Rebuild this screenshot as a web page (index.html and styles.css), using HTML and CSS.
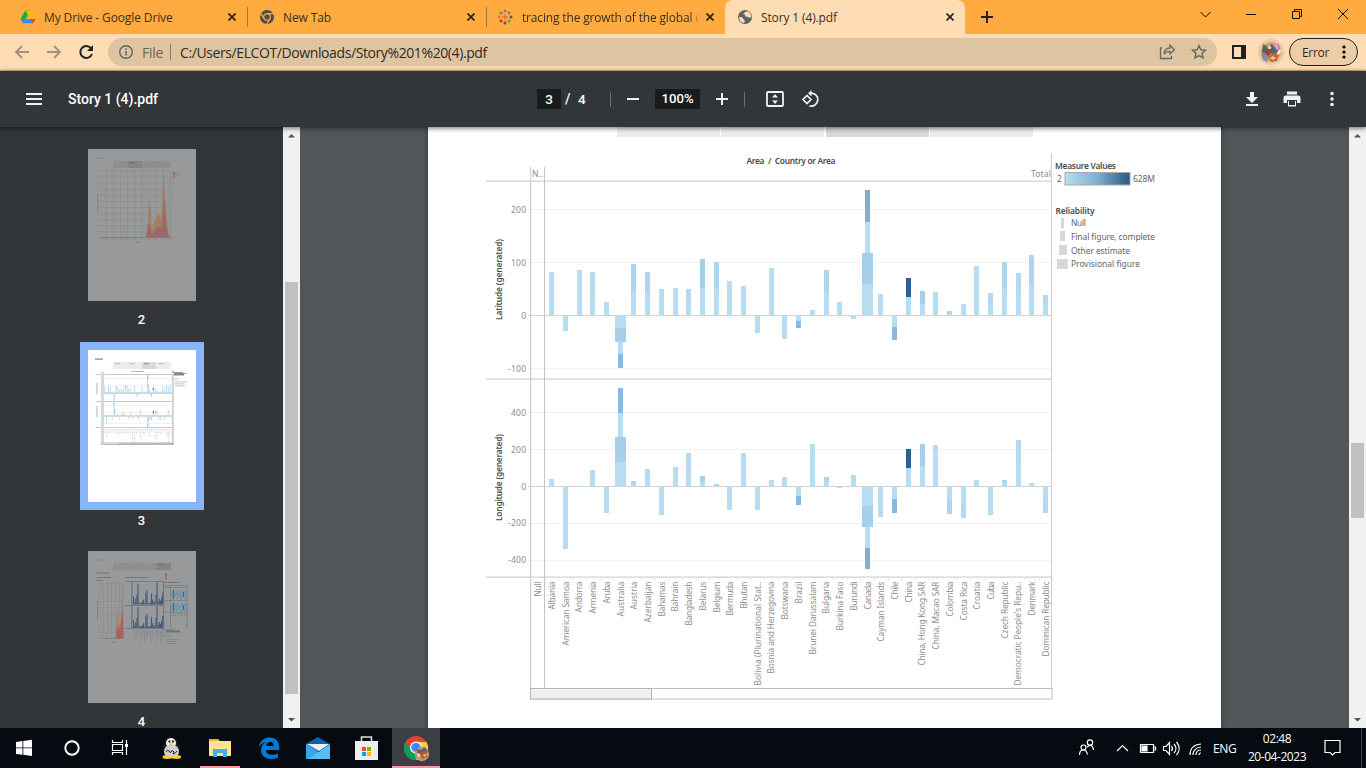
FILE: index.html
```html
<!DOCTYPE html>
<html lang="en">
<head>
<meta charset="utf-8">
<title>Story 1 (4).pdf</title>
<link rel="stylesheet" href="styles.css">
</head>
<body>
<div class="screen">
  <header class="tabs">
    <div class="tab t1">
      <svg class="fav" viewBox="0 0 16 16"><path d="M5.4 1.5 10.6 1.5 7.8 6z" fill="#188038"/><path d="M5.4 1.5 8 6 3.2 14.2.6 9.8z" fill="#1ea44c"/><path d="M5.4 1.5h5.2L15.4 10h-5.2z" fill="#fbbc04"/><path d="M.7 10h14.7l-2.5 4.2H3.2z" fill="#4285f4"/><path d="M10.2 10h5.2l-2.5 4.2z" fill="#ea4335"/><path d="M8 6l2.3 4H5.7z" fill="#ffab40"/></svg>
      <span class="tt">My Drive - Google Drive</span>
      <svg class="x" viewBox="0 0 8 8"><path d="M.5.5l7 7m0-7l-7 7"/></svg>
    </div>
    <div class="tab t2">
      <svg class="fav" viewBox="0 0 16 16"><circle cx="8" cy="8" r="7" fill="#4a4d51"/><circle cx="8" cy="8" r="3.4" fill="#4a4d51" stroke="#ffab40" stroke-width="1.2"/><path d="M8 4.6h6.4M5 9.8 1.8 4.4M11 9.7 7.8 15" stroke="#ffab40" stroke-width="1.2"/></svg>
      <span class="tt">New Tab</span>
      <svg class="x" viewBox="0 0 8 8"><path d="M.5.5l7 7m0-7l-7 7"/></svg>
    </div>
    <div class="tab t3">
      <svg class="fav" viewBox="0 0 16 16" fill="none"><path d="M8 5v6M5 8h6" stroke="#e8762d" stroke-width="1.300"/><path d="M4 2.500v3M2.500 4h3M12 10.500v3M10.500 12h3" stroke="#4f7d94" stroke-width="1.200"/><path d="M12 2.500v3M10.500 4h3M8 .5v3M6.500 2h3" stroke="#5b7591" stroke-width="1.200"/><path d="M4 10.500v3M2.500 12h3" stroke="#c72035" stroke-width="1.300"/><path d="M2 6.500v3M.5 8h3" stroke="#d96a4c" stroke-width="1.200"/><path d="M14 6.500v3M12.500 8h3M8 12.500v3M6.500 14h3" stroke="#1f457e" stroke-width="1.200"/></svg>
      <span class="tt fade">tracing the growth of the global c</span>
      <svg class="x" viewBox="0 0 8 8"><path d="M.5.5l7 7m0-7l-7 7"/></svg>
    </div>
    <div class="tab t4">
      <svg class="fav" viewBox="0 0 16 16"><circle cx="8" cy="8" r="7" fill="#5f6368"/><path d="M2 8.500c1.500-.7 3-.4 3.800.5 1 .9.4 1.600 1.600 1.900l.4 1.800-1.300 1.200C4 13.500 2.200 11.500 2 8.500zM8 3l3-.7c2 1 3.200 3 3.200 5.700-.8 1-2.200.8-3.200 0-1-.7-1.300.2-2.300-.4-.9-.7 0-2-1.200-2.300L6 5.200z" fill="#ffddb4"/></svg>
      <span class="tt">Story 1 (4).pdf</span>
      <svg class="x" viewBox="0 0 8 8"><path d="M.5.5l7 7m0-7l-7 7"/></svg>
    </div>
    <svg class="plus" viewBox="0 0 12 12"><path d="M6 0v12M0 6h12"/></svg>
    <svg class="winctl" viewBox="0 0 150 34" fill="none" stroke="#111"><path d="M.5 12l5 5 5-5M46 14.500h10M92.500 11.500h7v7h-7zM94.500 11.500v-2h7v7h-2M138 9l10 10m0-10l-10 10"/></svg>
  </header>

  <div class="addr">
    <svg class="nav" viewBox="0 0 94 36" fill="none" stroke-width="1.800"><path d="M29 18H16m6-6-6 6 6 6M47 18h13m-6-6 6 6-6 6" stroke="#a3917b"/><path d="M91 14.200A6 6 0 1 0 92 20" stroke="#202124" stroke-width="2"/><path d="M93 11v6h-6z" fill="#202124"/></svg>
    <div class="omni">
      <svg class="info" viewBox="0 0 16 16"><circle cx="8" cy="8" r="6.300" fill="none" stroke="#5f6368" stroke-width="1.400"/><path d="M8 7v4.500M8 4.500v1.600" stroke="#5f6368" stroke-width="1.500"/></svg>
      <span class="file">File</span><i class="vbar"></i>
      <span class="url">C:/Users/ELCOT/Downloads/Story%201%20(4).pdf</span>
      <svg class="omi" viewBox="0 0 50 20" fill="none" stroke="#6a6761" stroke-width="1.300"><path d="M3 6H1.500v10.500h11V14M5 12c.6-4.300 3-6 6-6V3.200L15.500 7.800 11 12V9.300C8.500 9.300 6.500 10 5 12z"/><path d="M40 3.500l1.900 4.200 4.600.5-3.400 3.100.9 4.500-4-2.300-4 2.300.9-4.500-3.400-3.100 4.600-.5z" stroke-width="1.500"/></svg>
    </div>
    <svg class="panel" viewBox="0 0 14 14"><path fill="#202124" d="M0 0h14v14H0z"/><path fill="#ffddb4" d="M2 2h7v10H2z"/></svg>
    <svg class="avatar" viewBox="0 0 26 26"><circle cx="13" cy="13" r="13" fill="#e9caa2"/><circle cx="13" cy="13" r="10" fill="#c8a27c"/><path d="M5 5l5 3 4-3 3 4 4-4 1 10-5 4-8-1-5-5z" fill="#536079"/><path d="M3 15l5-1 2 4-1 5-4-2z" fill="#818aa0"/><circle cx="11.500" cy="8.500" r="1.800" fill="#e6dc62"/><path d="M7 11l5-1-1 5-3 1z" fill="#c8322e"/><path d="M17 5l3-1 1 6-3 1z" fill="#e89ac0"/><path d="M10 17l3-3 3 1 4-4 1 4-2 7-6 1z" fill="#c46a32"/><path d="M12 19l3-2 3 2-3 2z" fill="#f2c59a"/><path d="M21 10l2 2-2 4-2-1z" fill="#fff"/></svg>
    <div class="error"><span>Error</span><svg viewBox="0 0 4 14"><circle cx="2" cy="2" r="1.600"/><circle cx="2" cy="7" r="1.600"/><circle cx="2" cy="12" r="1.600"/></svg></div>
  </div>

  <div class="pdfbar">
    <svg class="ham" viewBox="0 0 16 12"><path d="M0 0h16v2H0zM0 5h16v2H0zM0 10h16v2H0z"/></svg>
    <span class="ptitle">Story 1 (4).pdf</span>
    <div class="ctl">
      <span class="box b3">3</span><span class="slash">/</span><span class="four">4</span><i class="sep s1"></i>
      <svg class="minus" viewBox="0 0 12 12"><path d="M0 5h12v2H0z"/></svg>
      <span class="box b100">100%</span>
      <svg class="add" viewBox="0 0 12 12"><path d="M0 5h12v2H0zM5 0h2v12H5z"/></svg><i class="sep s2"></i>
      <svg class="fit" viewBox="0 0 18 16"><rect x="1" y="1" width="16" height="14" rx="1" fill="none" stroke="#f1f1f1" stroke-width="1.800"/><path d="M9 3l3 3.500H6zM9 13l3-3.500H6z"/></svg>
      <svg class="rot" viewBox="0 0 18 18" fill="none" stroke="#f1f1f1" stroke-width="1.700"><path d="M6 5.500l4 4-4 4-4-4zM9.500 3.200a6.500 6.500 0 1 1-1 12.700"/><path d="M10.500 0v6.400L7 3.200z" fill="#f1f1f1" stroke="none"/></svg>
    </div>
    <svg class="acts" viewBox="0 0 94 18"><path d="M4 2h4v5h4l-6 6-6-6h4zM0 14h12v2H0zM41 1.500h10v3H41zM40 5.500h12c2 0 2.500 1 2.500 2.500v5h-3.500V10H41v3h-3.500V8c0-1.500.5-2.500 2.500-2.500zM42 11h8v5.500h-8z"/><path d="M43 11h6v4h-6z" fill="#323639"/><circle cx="86" cy="3.500" r="1.800"/><circle cx="86" cy="9" r="1.800"/><circle cx="86" cy="14.500" r="1.800"/></svg>
  </div>

  <main class="viewer">
    <aside class="side">
      <svg class="thumb" id="thumb2" viewBox="0 0 108 152"></svg><span class="num">2</span>
      <div class="selected"><svg class="thumb" id="thumb3" viewBox="0 0 108 152"></svg></div><span class="num n3">3</span>
      <svg class="thumb th4" id="thumb4" viewBox="0 0 108 152"></svg><span class="num">4</span>
    </aside>
    <div class="scroll"><svg class="arrow" viewBox="0 0 17 17"><path d="M5 10.500h7L8.500 7z"/></svg><i class="st side-thumb"></i><svg class="arrow" viewBox="0 0 17 17"><path d="M5 7h7l-3.500 3.500z"/></svg></div>
    <section class="canvas">
      <article class="page"><svg id="chart" viewBox="428 127 793 601"></svg></article>
    </section>
    <div class="scroll"><svg class="arrow" viewBox="0 0 17 17"><path d="M5 10.500h7L8.500 7z"/></svg><i class="st main-thumb"></i><svg class="arrow" viewBox="0 0 17 17"><path d="M5 7h7l-3.500 3.500z"/></svg></div>
  </main>

  <footer class="task">
    <div class="apps">
    <div class="app"><svg viewBox="0 0 48 40"><path fill="#fff" d="M16 14l6.500-.9v6.400H16zM23.300 13l8.700-1.200v7.700h-8.700zM16 20.300h6.500v6.500L16 25.900zM23.300 20.300H32V28l-8.700-1.200z"/></svg></div>
    <div class="app"><svg viewBox="0 0 48 40"><circle cx="24" cy="20" r="6.700" fill="none" stroke="#fff" stroke-width="1.900"/></svg></div>
    <div class="app"><svg viewBox="0 0 48 40" fill="none" stroke="#fff" stroke-width="1.200"><path d="M16.500 12v2.500h10V12M16.500 27v-2.500h10V27M16.500 16.500h10v6h-10zM30.500 12v4M30.500 19v8"/><path d="M29 16h3v3h-3z" fill="#fff" stroke="none"/></svg></div>
    <div class="app"><svg viewBox="0 0 48 40"><path d="M19 19l3-7 5-2 6 2 3 8-4 4H22z" fill="#1c1c1c"/><circle cx="27" cy="15" r="5" fill="#eee"/><ellipse cx="27.500" cy="23.500" rx="7.500" ry="7" fill="#cfcfcf"/><path d="M24.500 12.500h2v2h-2zM28 12.500h2v2h-2z" fill="#222"/><path d="M25 15.500h4l-2 2.500z" fill="#ebc228"/><path d="M22 24q1-3 3-1t1 2q2-4 4-1l-1 2q3-1 4-3" fill="none" stroke="#222"/><ellipse cx="23" cy="29" rx="4.500" ry="1.900" fill="#ffd02f"/><ellipse cx="32.500" cy="29" rx="4.500" ry="1.900" fill="#ffd02f"/></svg></div>
    <div class="app folder"><svg viewBox="0 0 48 40"><path fill="#e8b643" d="M17 11h9l2 2h11v3H17z"/><path fill="#ffe394" d="M17 13h22v15H17z"/><path fill="#3eb3e8" d="M21 21h14v8h-4v-4h-6v4h-4z"/></svg></div>
    <div class="app"><svg viewBox="0 0 48 40"><path fill="#0078d7" d="M19 19c1-7 6-9.500 10.500-9.500 6 0 9.700 4.200 9.700 9.500v3H26c.2 3.500 3 4.800 6 4.800 2.500 0 4.500-.7 6-1.600v4.200c-2 1.100-4.300 1.600-7 1.600-6 0-10-3.500-10-9 0-4 2-6.500 5-7.800-3 .4-5.500 2-7 4.800zm7.300-1h7.500c0-2.500-1.300-4-3.600-4-2.100 0-3.500 1.500-3.900 4z"/></svg></div>
    <div class="app"><svg viewBox="0 0 48 40"><path fill="#0864ad" d="M18 16l12-7 12 7v7H18z"/><path fill="#eee" d="M19 16h22L31 23z"/><path fill="#31a8ec" d="M18 16l24 15H18z"/><path fill="#54bff5" d="M42 16v15H20l12-8z"/></svg></div>
    <div class="app"><svg viewBox="0 0 48 40"><path fill="none" stroke="#ddd" stroke-width="1.500" d="M25.500 14V9h10v5"/><path fill="#eee" d="M19 13h23v19H19z"/><path fill="#f25022" d="M26 19h4v4h-4z"/><path fill="#7fba00" d="M31 19h4v4h-4z"/><path fill="#00a4ef" d="M26 24h4v4h-4z"/><path fill="#ffb900" d="M31 24h4v4h-4z"/></svg></div>
    <div class="app chrome"><svg viewBox="0 0 48 40"><circle cx="24" cy="20" r="12" fill="#db4437"/><path d="M13.600 14A12 12 0 0 0 24 32l6-9-11-1z" fill="#0f9d58"/><path d="M24 14h10.400A12 12 0 0 1 24 32l5-9z" fill="#ffcd40"/><circle cx="24" cy="19.500" r="6" fill="#fff"/><circle cx="24" cy="19.500" r="4.700" fill="#4285f4"/><circle cx="30" cy="26" r="7.200" fill="#c5966d"/><path d="M24 21l5 1 4-3 3 5-5 3-5-1z" fill="#596171"/><path d="M28 25l6-2 1 6-5 2z" fill="#b65e2c"/><path d="M25 25l3 1-1 4z" fill="#eee"/><path d="M31 27l3-1-1 3z" fill="#f6d8a8"/></svg></div>
    </div>
    <svg class="tray" viewBox="0 0 130 40" fill="none" stroke="#fff" stroke-width="1.200"><g transform="translate(-1 0)"><circle cx="12" cy="14.500" r="2.700"/><circle cx="5.500" cy="19.500" r="2.500"/><path d="M1.500 27c0-3 1.500-5 4-5s3.500 2 4 4.500M9 19c3-3 6-2 6.500 3"/></g><path d="M38 23l5.500-5.500L49 23M61.500 16.500h13v8h-13zM75 19h1.500v3H75"/><path d="M63 18h5v5h-5z" fill="#fff"/><path d="M84.500 18.500H87l3.500-4v12l-3.500-4h-2.500zM92.500 18q2 2.500 0 5M95 16q4 4.500 0 9M97.500 14q5.500 6.500 0 13M111 27q0-10 11-11M114 27q0-7 8-8M117 27q0-5 5-5M120 27q0-2 2-2"/></svg>
    <span class="eng">ENG</span>
    <div class="clock"><span>02:48</span><span>20-04-2023</span></div>
    <svg class="note" viewBox="0 0 18 18"><path d="M1 1.500h15v12h-5l-2.500 2.500L6 13.500H1z" fill="none" stroke="#fff" stroke-width="1.200"/></svg>
    <i class="peek"></i>
  </footer>
</div>
<script src="app.js"></script>
</body>
</html>
```
FILE: styles.css
```css
* { box-sizing: border-box; }
body { margin: 0; font-family: "Open Sans", "Noto Sans", sans-serif; }
svg { display: block; flex: none; }
.screen { width: 1366px; height: 768px; display: flex; flex-direction: column; overflow: hidden; }
.tabs { height: 34px; flex: none; background: #ffab40; display: flex; }
.tab { height: 34px; display: flex; align-items: center; font-size: 12px; color: #3c2f1e; padding-right: 11px; }
.t1 { width: 248px; padding-left: 20px; border-right: 1px solid #a9763a; height: 20px; margin-top: 7px; }
.t2 { width: 239px; padding-left: 11px; border-right: 1px solid #a9763a; height: 20px; margin-top: 7px; }
.t3 { width: 238px; padding-left: 10px; }
.t4 { width: 240px; padding-left: 12px; background: #ffddb4; border-radius: 8px 8px 0 0; }
.fav { width: 16px; height: 16px; margin-right: 8px; }
.tt { flex: 1; white-space: nowrap; letter-spacing: -.13px; }
.t1 .tt { letter-spacing: -.12px; }
.t3 .tt { letter-spacing: -.16px; margin-left: 1px; }
.fade { margin-right: 3px; -webkit-mask-image: linear-gradient(90deg, #000 168px, transparent 178px); mask-image: linear-gradient(90deg, #000 168px, transparent 178px); }
.x { width: 8px; height: 8px; stroke: #222; stroke-width: 1.7; }
.plus { width: 12px; height: 12px; margin: 11px 0 0 16px; stroke: #202124; stroke-width: 2; }
.winctl { width: 150px; height: 34px; margin: 0 16px 0 auto; }
.addr { height: 37px; flex: none; background: #ffddb4; border-bottom: 1px solid #d3b793; display: flex; align-items: center; }
.nav { width: 94px; height: 36px; }
.omni { width: 1109px; height: 28px; margin-left: 14px; background: #dfc4a1; border-radius: 14px; display: flex; align-items: center; padding: 0 8px 0 10px; font-size: 14px; }
.info { width: 16px; height: 16px; }
.file { color: #706657; margin-left: 8px; width: 21px; letter-spacing: -.3px; }
.vbar { width: 1px; height: 16px; background: #8c7c68; margin: 0 9px 0 7px; }
.url { color: #302b24; letter-spacing: -.4px; flex: 1; white-space: nowrap; }
.omi { width: 50px; height: 20px; }
.panel { width: 14px; height: 14px; margin-left: 15px; }
.avatar { width: 26px; height: 26px; margin-left: 12px; }
.error { width: 69px; height: 28px; border: 1px solid #202124; background: #eccda7; border-radius: 14px; margin-left: 5px; display: flex; align-items: center; justify-content: space-between; padding: 0 11px 0 12px; font-size: 12px; color: #302b24; letter-spacing: -.3px; }
.error svg { width: 4px; height: 14px; }
.pdfbar { height: 56px; flex: none; background: #323639; display: flex; align-items: center; color: #fff; fill: #f1f1f1; font: 500 14px Roboto, sans-serif; position: relative; z-index: 2; box-shadow: 0 1px 5px rgba(0,0,0,.6); }
.ham { width: 16px; height: 12px; margin-left: 26px; }
.ptitle { margin-left: 26px; width: 469px; }
.ctl { display: flex; align-items: center; height: 20px; }
.box { height: 20px; line-height: 20px; background: #191b1c; text-align: center; }
.b3 { width: 24px; font-size: 13.5px; }
.slash { margin-left: 4px; width: 9px; }
.four { width: 8px; margin-left: 4px; font-size: 13.5px; }
.sep { width: 1px; height: 15px; background: #6d7072; }
.s1 { margin: 0 16px 0 24px; }
.minus, .add { width: 12px; height: 12px; }
.b100 { width: 45px; margin: 0 16px; font-size: 13.2px; }
.s2 { margin: 0 21px 0 16px; }
.fit { width: 18px; height: 16px; }
.rot { width: 18px; height: 18px; margin-left: 17px; }
.acts { width: 94px; height: 18px; margin: 0 26px 0 auto; }
.viewer { height: 601px; flex: none; display: flex; }
.side { width: 283px; background: #323639; display: flex; flex-direction: column; align-items: center; padding: 22px 0 0 1px; overflow: hidden; color: #fff; font: 500 13px/15px Roboto, sans-serif; }
.side > * { flex: none; }
.thumb { width: 108px; height: 152px; }
#thumb2, #thumb4 { background: #98999b; }
.num { margin-top: 11px; padding-right: 1px; }
.selected { width: 124px; height: 168px; padding: 8px; margin-top: 15px; background: #8ab4f8; }
#thumb3 { background: #fff; }
.n3 { margin-top: 3px; }
.th4 { margin-top: 23px; }
.scroll { width: 17px; height: 601px; background: #f1f1f1; display: flex; flex-direction: column; flex: none; }
.arrow { width: 17px; height: 17px; fill: #505050; }
.st { width: 13px; margin-left: 2px; background: #c1c1c1; flex: none; }
.side-thumb { height: 412px; margin-top: 138px; margin-bottom: 17px; }
.main-thumb { height: 75px; margin-top: 299px; margin-bottom: 193px; }
.canvas { width: 1049px; background: #525659; padding-left: 128px; }
.page { width: 793px; height: 601px; background: #fff; box-shadow: 0 0 5px rgba(0,0,0,.4); }
#chart { width: 793px; height: 601px; font-family: "Noto Sans", "Open Sans", sans-serif; }
.axis { font-size: 8.5px; fill: #8c8c8c; }
.lbl { font-size: 8.3px; fill: #8f8f8f; }
.leg { font-size: 8.5px; fill: #666; }
.head { font-size: 8.4px; font-weight: 600; fill: #4c4c4c; }
.task { height: 40px; flex: none; background: #060a11; display: flex; align-items: center; color: #fff; }
.apps { display: flex; width: 440px; flex: none; }
.app { width: 48px; height: 40px; overflow: hidden; }
.app svg { width: 48px; height: 40px; }
.folder { width: 40px; margin-left: 8px; border-bottom: 2px solid #f5989d; }
.folder svg { margin-left: -8px; }
.chrome { margin-left: 8px; background: #3b3e43; border-bottom: 2px solid #f5989d; }
.tray { width: 130px; height: 40px; margin-left: 639px; }
.eng { font-size: 12px; width: 24px; margin-left: 4px; letter-spacing: -.4px; }
.clock { display: flex; flex-direction: column; width: 60px; margin-left: 10px; font-size: 12px; line-height: 18px; align-items: center; letter-spacing: -.45px; }
.note { width: 18px; height: 18px; margin-left: 17px; }
.peek { width: 1px; height: 40px; margin-left: auto; margin-right: 4px; background: #42464c; }
```
FILE: app.js
```js
const NS = 'http://www.w3.org/2000/svg';
const L = '#b8ddf1', M = '#afd4ee', N = '#a6d0ea', B = '#8bb8dc', C = '#7eafd4', D = '#31608f';

function add(parent, tag, attrs, text) {
  const e = document.createElementNS(NS, tag);
  for (const k in attrs) e.setAttribute(k, attrs[k]);
  if (text) e.textContent = text;
  parent.appendChild(e);
  return e;
}
const rect = (p, x, y, width, height, fill) => add(p, 'rect', {x, y, width, height, fill});

// name, label length, latitude segments, longitude segments: [top, bottom, colour, width]
const rows = [
  ['Albania', 28, [[272,316,L]], [[479,487,L]]],
  ['American Samoa', 64, [[315,331,L]], [[487,549,L]]],
  ['Andorra', 31, [[270,315,L]], [[486,487,L]]],
  ['Armenia', 32, [[272,294,'#b5daf0'],[294,316,L]], [[470,479,'#b5daf0'],[479,487,L]]],
  ['Aruba', 22, [[302,315,L]], [[486,513,L]]],
  ['Australia', 35, [[315,328,L,11],[328,342,N,11],[341,354,L],[354,368,B]], [[388,413,B],[413,438,L],[437,462,N,11],[462,487,L,11]]],
  ['Austria', 28, [[264,290,M],[290,316,L]], [[481,484,M],[484,487,L]]],
  ['Azerbaijan', 41, [[272,294,M],[294,316,L]], [[469,478,'#b5daf0'],[478,487,L]]],
  ['Bahamas', 35, [[289,316,L]], [[487,515,L]]],
  ['Bahrain', 30, [[288,315,L]], [[467,487,L]]],
  ['Bangladesh', 44, [[289,303,'#b5daf0'],[303,316,L]], [[453,470,'#b5daf0'],[470,487,L]]],
  ['Belarus', 29, [[259,288,N],[288,316,L]], [[476,481,N],[481,487,L]]],
  ['Belgium', 31, [[262,289,M],[289,316,L]], [[484,486,M],[486,487,L]]],
  ['Bermuda', 34, [[281,316,L]], [[487,510,L]]],
  ['Bhutan', 27, [[286,316,L]], [[453,487,L]]],
  ['Bolivia (Plurinational Stat..', 104, [[315,333,L]], [[487,510,L]]],
  ['Bosnia and Herzegovina', 92, [[268,316,L]], [[480,487,L]]],
  ['Botswana', 38, [[315,339,L]], [[477,487,L]]],
  ['Brazil', 22, [[315,321,L],[321,328,B]], [[487,496,L],[496,505,B]]],
  ['Brunei Darussalam', 73, [[310,316,L]], [[444,487,L]]],
  ['Bulgaria', 32, [[270,293,M],[293,316,L]], [[477,482,M],[482,487,L]]],
  ['Burkina Faso', 49, [[302,316,L]], [[487,488,L]]],
  ['Burundi', 29, [[315,319,L]], [[475,487,L]]],
  ['Canada', 28, [[190,222,C],[222,253,L],[253,284,N,11],[284,316,L,11]], [[487,506,L,11],[506,527,N,11],[527,548,L],[548,569,C]]],
  ['Cayman Islands', 60, [[294,316,L]], [[486,517,L]]],
  ['Chile', 18, [[315,327,L],[327,340,B]], [[486,499,L],[499,513,B]]],
  ['China', 21, [[278,297,D],[297,316,L]], [[449,468,D],[468,487,L]]],
  ['China, Hong Kong SAR', 84, [[291,304,N],[304,316,L]], [[444,466,N],[466,487,L]]],
  ['China, Macao SAR', 68, [[292,315,L]], [[445,487,L]]],
  ['Colombia', 35, [[311,314,M],[314,316,L]], [[486,500,L],[500,514,M]]],
  ['Costa Rica', 39, [[304,316,L]], [[486,502,L],[502,518,'#b5daf0']]],
  ['Croatia', 28, [[266,315,L]], [[480,487,L]]],
  ['Cuba', 18, [[293,304,'#b5daf0'],[304,316,L]], [[487,515,L]]],
  ['Czech Republic', 57, [[262,289,M],[289,316,L]], [[480,483,M],[483,487,L]]],
  ["Democratic People's Repu..", 104, [[273,294,'#b5daf0'],[294,316,L]], [[440,463,'#b5daf0'],[463,487,L]]],
  ['Denmark', 34, [[255,286,M],[286,316,L]], [[483,487,L]]],
  ['Dominican Republic', 75, [[295,305,'#b5daf0'],[305,316,L]], [[486,499,L],[499,513,'#b5daf0']]]
];

const chart = document.getElementById('chart');
const txt = (cls, x, y, len, s, extra) => add(chart, 'text', Object.assign({class: cls, x, y, textLength: len}, extra), s);

// story navigator strip
[[617,103],[721,103],[826,103],[930,103]].forEach(([x, w], i) => rect(chart, x, 127, w, 10, i === 2 ? '#d9d9d9' : '#ebebeb'));

// grid
[209, 262, 368, 412, 449, 523, 560].forEach(y => rect(chart, 528, y, 523, 1, '#f1f1f1'));
[180.500, 378.500, 576.500].forEach(y => rect(chart, 486, y, 566, 1.200, '#cfcfcf'));
[315, 486].forEach(y => rect(chart, 528, y, 523, 1, '#d2d2d2'));
rect(chart, 530, 167, 1.300, 532, '#d0d0d0');
rect(chart, 544, 167, 1, 521, '#c4c4c4');
rect(chart, 1051, 153, 1, 546, '#cecece');

rows.forEach(([name, len, lat, lon], i) => {
  const c = 551.600 + i * 13.722;
  lat.concat(lon).forEach(([t, b, fill, w = 5]) => rect(chart, Math.round(c - w / 2), t, w, b - t, fill));
  rect(chart, Math.round(c + 6.800), 577, 1, 3, '#e6e6e6');
  txt('lbl', 0, 0, len, name, {'text-anchor': 'end', transform: `translate(${c + 3.300} 581.500) rotate(-90)`});
});
txt('lbl', 0, 0, 15, 'Null', {'text-anchor': 'end', transform: 'translate(541 581.500) rotate(-90)'});

[['200',213,15],['100',266,15],['0',319,5],['-100',372,18],['400',416,15],['200',453,15],['0',490,5],['-200',526,18],['-400',563,18]]
  .forEach(([s, y, w]) => txt('axis', 526, y, w, s, {'text-anchor': 'end'}));
txt('axis', 532, 177, 11, 'N..');
txt('axis', 1031, 177, 20, 'Total');
txt('head', 746.500, 164, 89, 'Area  /  Country or Area', {style: 'white-space:pre'});
txt('head', 0, 0, 81, 'Latitude (generated)', {transform: 'translate(501.500 320) rotate(-90)'});
txt('head', 0, 0, 87, 'Longitude (generated)', {transform: 'translate(501.500 521) rotate(-90)'});

// horizontal scrollbar
add(chart, 'rect', {x: 530.500, y: 688.500, width: 521.500, height: 10.500, fill: '#fff', stroke: '#bdbdbd'});
add(chart, 'rect', {x: 530.500, y: 688.500, width: 121, height: 10.500, fill: '#efefef', stroke: '#b5b5b5'});

// legends
const defs = add(chart, 'defs', {});
const grad = add(defs, 'linearGradient', {id: 'ramp'});
[[0,'#b9ddf1'],[.5,'#7eaed3'],[1,'#2a5783']].forEach(([offset, c]) => add(grad, 'stop', {offset, 'stop-color': c}));
txt('head', 1055, 169, 61, 'Measure Values');
txt('leg', 1057, 182, 5, '2');
add(chart, 'rect', {x: 1065, y: 172.500, width: 65, height: 12.500, fill: 'url(#ramp)', stroke: '#a9a9a9'});
txt('leg', 1133, 182, 22, '628M');
txt('head', 1055.500, 214, 39, 'Reliability');
[['Null',15,1061,3,218,226],['Final figure, complete',84,1060,5,231,240],['Other estimate',59,1059,8,245,254],['Provisional figure',69,1057,11,259,267]]
  .forEach(([s, len, x, w, y, base]) => { rect(chart, x, y, w, 10, '#d7d7d7'); txt('leg', 1071, base, len, s); });

// page thumbnails
const t2 = document.getElementById('thumb2'), t3 = document.getElementById('thumb3'), t4 = document.getElementById('thumb4');
function stripTop(t, active, base, on) {
  rect(t, 7, 8.500, 8, 1.200, '#858585');
  for (let i = 0; i < 4; i++) {
    rect(t, 25 + i * 14.500, 12, 14.500, 7, i === active ? on : base);
    rect(t, 27 + i * 14.500, 13.500, 5, .6, i === active ? '#555' : '#999');
  }
}
stripTop(t2, 1, '#8e8e8f', '#848485');
for (let i = 0; i < 12; i++) { rect(t2, 14, 21.500 + i * 6.100, 71, .8, '#8d8e90'); rect(t2, 10.500, 21.300 + i * 6.100, 3, .7, '#858687'); }
for (let i = 0; i < 10; i++) { rect(t2, 18 + i * 7.100, 21, .8, 67, '#8d8e90'); rect(t2, 17 + i * 7.100, 90, 2.500, .7, '#858687'); }
rect(t2, 14, 88, 71, 1, '#7c7d7e');
rect(t2, 9, 45, 1, 19, '#828385');
rect(t2, 48, 93, 3, .8, '#777');
add(t2, 'path', {d: 'M46 89l4-1 8 .3L60 72l1.300-23L63 64l1 18 2-9 3-6 1-2 3 5 1-15L75.500 23 77 46l2 24 2 18z', fill: '#a18060'});
add(t2, 'path', {d: 'M58 88.500l3-15 3 12 6-8 4 1.500 2-30 2 27 3 12z', fill: '#9c676b'});
['#666b74','#aa7b45','#9e6668'].forEach((f, i) => rect(t2, 85, 23 + i * 1.800, 2, 1.700, f));
rect(t2, 87, 24, 4, .7, '#858585');
rect(t2, 87, 25.500, 4, .7, '#858585');

stripTop(t3, 2, '#ececec', '#d9d9d9');
rect(t3, 43, 21, 13, .8, '#aaa');
[26,33,41,53,60,71].forEach(y => rect(t3, 14, y + 2, 71, .5, '#e4e4e4'));
[24,51,77].forEach(y => rect(t3, 7.500, y, 77, 1, '#c9c9c9'));
[42.500,65.500].forEach(y => rect(t3, 14, y, 71, 1, '#b8b8b8'));
rect(t3, 13, 22, 3, 73, '#d8d8d8');
rect(t3, 84, 20, 1.800, 75, '#d1d1d1');
rows.forEach(([name, len, lat, lon], i) => {
  const x = 16.200 + i * 1.870;
  lat.forEach(([t, b, f, w]) => rect(t3, x, 43 + (t - 315.500) * .142, w ? 1.600 : 1, (b - t) * .142, f));
  lon.forEach(([t, b, f, w]) => rect(t3, x, 66 + (t - 487) * .136, w ? 1.600 : 1, (b - t) * .136, f));
  add(t3, 'path', {d: `M${x + .5} 79v${len * .135}`, stroke: '#ccc', 'stroke-width': .8, 'stroke-dasharray': '1 .5'});
});
[33,56].forEach(y => rect(t3, 8.500, y, 1, 11, '#b4b4b4'));
rect(t3, 13, 92.500, 72.500, 2.500, '#b9b9b9');
rect(t3, 14, 93, 17, 1, '#ddd');
rect(t3, 85, 22, 10, .8, '#888');
rect(t3, 86, 23, 10, 2.500, '#728d9c');
rect(t3, 96, 23, 3, .8, '#999');
[28.500,31.500,33.500,35.500].forEach((y, i) => rect(t3, i ? 87 : 85, y, [6,12,9,10][i], .8, '#b5b5b5'));

stripTop(t4, 3, '#8e8e8f', '#848485');
[[8,21.500,14],[8,26,15],[8,29,7],[37,26,24],[77,31,14]].forEach(([x, y, w]) => rect(t4, x, y, w, 1, '#777'));
for (let i = 0; i < 10; i++) { rect(t4, 14, 32 + i * 6.100, 22, .6, '#8d8e90'); rect(t4, 10.500, 32 + i * 6.100, 3, .7, '#858687'); }
for (let i = 0; i < 6; i++) rect(t4, 15 + i * 4, 31, .6, 57, '#8d8e90');
rect(t4, 14, 87, 22, .8, '#7c7d7e');
rect(t4, 9, 50, 1, 19, '#828385');
rect(t4, 24, 91, 3, .8, '#777');
add(t4, 'path', {d: 'M28 87l1.500-32L31 76l2-8 1.200-37L35.500 87z', fill: '#a18060'});
add(t4, 'path', {d: 'M28 87l1-12 2 5 2-7 1.500-14 1 28z', fill: '#a9605f'});
rect(t4, 43, 30, 1.500, 48, '#777a7e');
rect(t4, 75, 30, 1.200, 48, '#777a7e');
[30,54,77].forEach(y => rect(t4, 37, y, 39, .9, '#747779'));
const heights = [8,2,6,10,21,2,1,2,3,5,1,12,14,2,1,2,11,5,2,3,10,22,3,6,4,7,12];
[53.500,77].forEach(base => heights.forEach((h, i) => rect(t4, 45 + i * 1.120, base - h, 1.120, h, '#415c78')));
for (let i = 0; i < 20; i++) rect(t4, 45 + i * 1.600, 79, .7, 4 + (i * 7) % 10, '#858687');
['#666b74','#aa7b45','#9e6668'].forEach((f, i) => rect(t4, 77, 22.500 + i * 2, 2, 1.900, f));
[34,36,49,61].forEach(y => rect(t4, 76, y, 24, .8, '#7e8082'));
[82,98.500].forEach(x => rect(t4, x, 34, 1, 43, '#7c7e80'));
[42,55].forEach(y => { for (let i = 0; i < 16; i++) { const k = (i * 5) % 4; rect(t4, 83 + i, y - k - 1, 1, 5 + k + (i * 3) % 4, i === 2 || i === 12 ? '#3d6482' : '#7896a6'); } });
for (let i = 0; i < 9; i++) rect(t4, 83.500 + i * 1.800, 62, .7, 3 + (i * 5) % 5, '#858687');
rect(t4, 76, 78, 9, .8, '#777');
rect(t4, 78, 79.500, 14, 2, '#66736f');
[84,86,88,90,92].forEach((y, i) => rect(t4, i ? 78 : 76, y, [6,3,12,9,10][i], .7, '#7f8082'));
```
